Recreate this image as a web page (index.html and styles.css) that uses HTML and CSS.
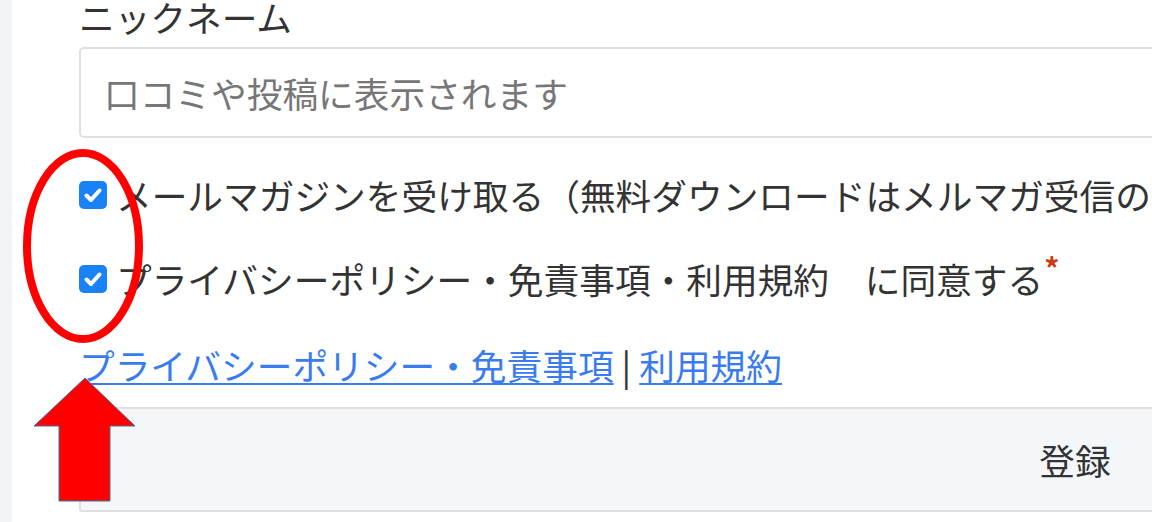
FILE: index.html
```html
<!DOCTYPE html>
<html lang="ja">
<head>
    <meta charset="UTF-8">
    <meta name="viewport" content="width=device-width, initial-scale=1.0">
    <title>会員登録</title>
    <link rel="stylesheet" href="styles.css">
</head>
<body>
    <div class="page">
        <div class="side"></div>
        <form class="form">
            <label class="label" for="nickname">ニックネーム</label>
            <input type="text" id="nickname" class="field" placeholder="口コミや投稿に表示されます">

            <label class="check">
                <span class="box">
                    <svg width="28" height="28" viewBox="0 0 28 28"><path d="M7.5 14.5 L12 19 L20.5 9.5" fill="none" stroke="#fff" stroke-width="4" stroke-linecap="round" stroke-linejoin="round"/></svg>
                </span>
                <span>メールマガジンを受け取る（無料ダウンロードはメルマガ受信の場合のみ）</span>
            </label>
            <label class="check">
                <span class="box">
                    <svg width="28" height="28" viewBox="0 0 28 28"><path d="M7.5 14.5 L12 19 L20.5 9.5" fill="none" stroke="#fff" stroke-width="4" stroke-linecap="round" stroke-linejoin="round"/></svg>
                </span>
                <span>プライバシーポリシー・免責事項・利用規約　に同意する<sup class="req">*</sup></span>
            </label>

            <p class="links">
                <a href="#">プライバシーポリシー・免責事項</a> | <a href="#">利用規約</a>
            </p>

            <button type="button" class="submit">登録</button>
        </form>
    </div>

    <!-- annotation drawn over the screenshot -->
    <svg class="marks" width="1152" height="522" viewBox="0 0 1152 522">
        <ellipse cx="83" cy="246" rx="56" ry="93" fill="none" stroke="#ff0000" stroke-width="8"/>
        <polygon points="85,378 135,426 110,426 110,501 59,501 59,426 34,426" fill="#ff0000" stroke="#41719c" stroke-width="1"/>
    </svg>
</body>
</html>
```

FILE: styles.css
```css
html, body {
    margin: 0;
    height: 100%;
}
body {
    font-family: "Noto Sans CJK JP", "Noto Sans", sans-serif;
    font-size: 35.7px;
    color: #333;
    background: #fff;
    overflow: hidden;
    position: relative;
}
.page {
    display: flex;
    height: 100%;
}
.side {
    flex: 0 0 12px;
    background: #f3f4f6;
}
.form {
    flex: 0 0 1992px;
    margin-left: 67px;
    display: flex;
    flex-direction: column;
    align-items: flex-start;
}
.label {
    display: block;
    line-height: 50px;
    margin-top: -8px;
    margin-bottom: 5px;
}
.field {
    box-sizing: border-box;
    width: 100%;
    height: 91px;
    padding: 0 23px;
    font-family: inherit;
    font-size: 35.7px;
    color: #333;
    border: 2px solid #e0e0e0;
    border-radius: 5px;
    background: #fff;
}
.field::placeholder {
    color: #777;
}
.check {
    display: flex;
    align-items: center;
    gap: 9px;
    line-height: 52px;
    white-space: nowrap;
    margin-top: 31px;
}
.check + .check {
    margin-top: 32px;
}
.box {
    width: 28px;
    height: 28px;
    border-radius: 5px;
    background: #1a82f7;
    display: flex;
}
.req {
    color: #cc3f12;
    font-weight: bold;
    font-size: 30px;
    line-height: 0;
    vertical-align: 14px;
    margin-left: 1px;
}
.links {
    margin: 34px 0 0;
    line-height: 52px;
    white-space: nowrap;
}
.links a {
    color: #3a7cf0;
    text-decoration: underline;
    text-decoration-thickness: 2px;
    text-underline-offset: 3px;
}
.submit {
    box-sizing: border-box;
    width: 100%;
    height: 105px;
    margin-top: 16px;
    font-family: inherit;
    font-size: 35.7px;
    color: #333;
    background: #f4f7fa;
    border: 2px solid #e0e0e0;
    border-radius: 3px;
}
.marks {
    position: absolute;
    left: 0;
    top: 0;
    pointer-events: none;
}
```
